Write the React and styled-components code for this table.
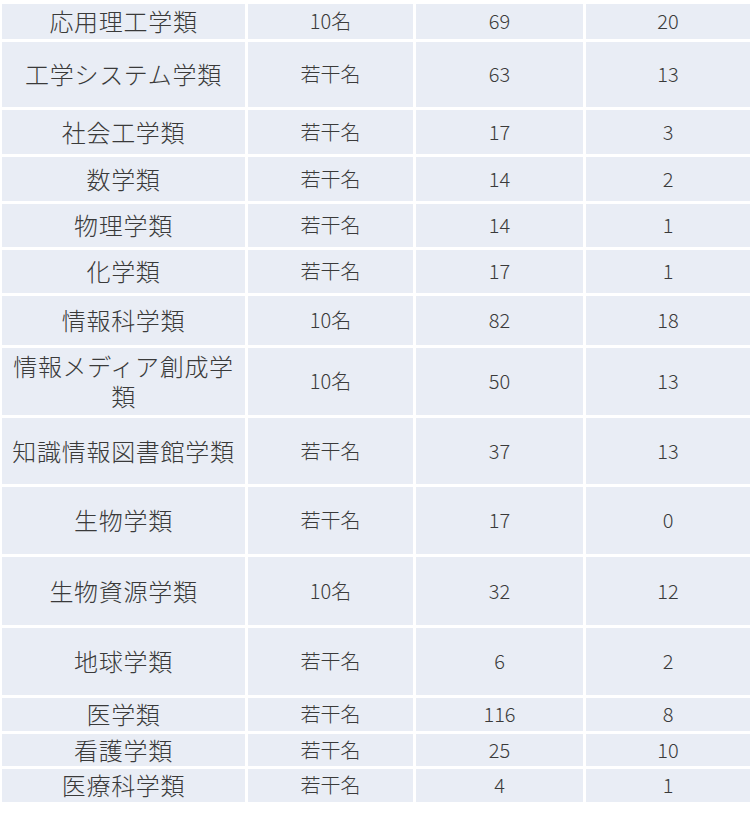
import React from "react";
import styled, { createGlobalStyle } from "styled-components";

const Global = createGlobalStyle`
  html, body { margin: 0; padding: 0; background: #ffffff; }
  body { font-family: "Noto Sans CJK JP", "Noto Sans", sans-serif; color: #333333; }
`;

const Page = styled.div`
  padding: 4px 0 0 2px;
  width: 754px;
  box-sizing: border-box;
`;

const Table = styled.div`
  display: flex;
  flex-direction: column;
  gap: 3px;
  width: 748px;
`;

const Row = styled.div`
  display: grid;
  grid-template-columns: 243px 165px 167px 164px;
  column-gap: 3px;
  height: ${(p) => p.$h}px;
`;

const Cell = styled.div`
  background: #e9edf5;
  display: flex;
  align-items: center;
  justify-content: center;
  text-align: center;
  font-size: 20px;
  font-weight: 300;
  line-height: 24px;
  color: #3a3a3a;
  padding: 0 6px 1px;
  box-sizing: border-box;
`;

const NameCell = styled(Cell)`
  font-size: 24px;
  letter-spacing: 0.7px;
  line-height: 30px;
  padding: 0 4px 1px;
`;

const rows = [
  ["応用理工学類", "10名", "69", "20", 35],
  ["工学システム学類", "若干名", "63", "13", 65],
  ["社会工学類", "若干名", "17", "3", 44],
  ["数学類", "若干名", "14", "2", 44],
  ["物理学類", "若干名", "14", "1", 43],
  ["化学類", "若干名", "17", "1", 43],
  ["情報科学類", "10名", "82", "18", 49],
  ["情報メディア創成学類", "10名", "50", "13", 67],
  ["知識情報図書館学類", "若干名", "37", "13", 66],
  ["生物学類", "若干名", "17", "0", 67],
  ["生物資源学類", "10名", "32", "12", 68],
  ["地球学類", "若干名", "6", "2", 67],
  ["医学類", "若干名", "116", "8", 33],
  ["看護学類", "若干名", "25", "10", 32],
  ["医療科学類", "若干名", "4", "1", 33],
];

export default function App() {
  return (
    <Page>
      <Global />
      <Table>
        {rows.map(([name, quota, a, b, h]) => (
          <Row key={name} $h={h}>
            <NameCell>{name}</NameCell>
            <Cell>{quota}</Cell>
            <Cell>{a}</Cell>
            <Cell>{b}</Cell>
          </Row>
        ))}
      </Table>
    </Page>
  );
}
